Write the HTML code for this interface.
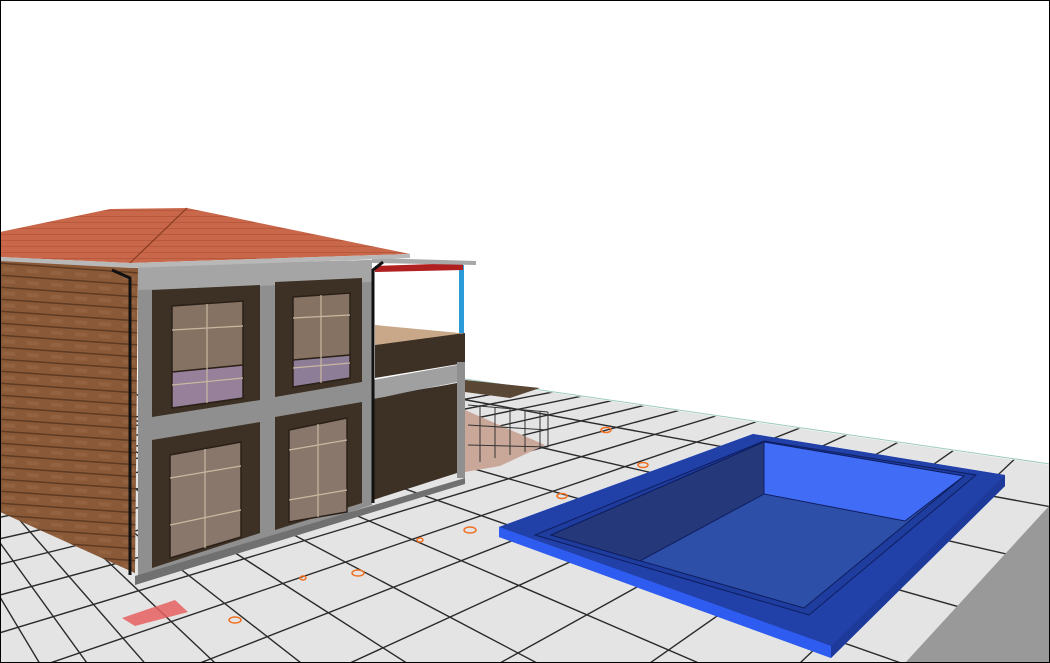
<!DOCTYPE html>
<html><head><meta charset="utf-8"><style>
html,body{margin:0;padding:0;background:#fff;overflow:hidden;width:1050px;height:663px;}
svg{display:block;}
</style></head><body>
<svg id="s" width="1050" height="663" viewBox="0 0 1050 663" xmlns="http://www.w3.org/2000/svg">
<defs>
<clipPath id="g"><polygon points="0,380 465,380 1050,465 1050,663 0,663"/></clipPath>
<pattern id="sid" width="24" height="12" patternUnits="userSpaceOnUse" patternTransform="skewY(4)">
<rect width="24" height="12" fill="#8a5a38"/><rect y="10.5" width="24" height="1.5" fill="#5e3a22"/><rect x="3" y="3" width="12" height="4" fill="#9a6848" opacity=".6"/></pattern>
<pattern id="rf" width="6" height="6" patternUnits="userSpaceOnUse"><rect width="6" height="6" fill="#c8674a"/><rect width="6" height="1" fill="#b8593e"/></pattern>
</defs>
<rect width="1050" height="663" fill="#fff"/>
<polygon points="0,380 465,380 1050,465 1050,663 0,663" fill="#e4e4e4"/>
<line x1="465" y1="379" x2="1050" y2="464" stroke="#9cc9be" stroke-width="1"/>
<g id="grid" clip-path="url(#g)" stroke="#2a2a2a" stroke-width="1.4" fill="none"></g>
<polygon points="905,663 1050,505 1050,663" fill="#999"/>
<!-- back deck -->
<polygon points="465,380 540,388 510,398 465,392" fill="#5a4634"/>
<polygon points="465,410 545,445 500,466 465,472" fill="#c9a89a"/>
<g stroke="#333" stroke-width="1" fill="none">
<path d="M468,405 L548,412 M468,425 L548,430 M468,445 L548,447"/>
<path d="M480,405 L480,462 M495,407 L495,458 M510,408 L510,455 M525,410 L525,452 M540,411 L540,449 M548,412 L548,447"/>
</g>
<!-- pool -->
<polygon points="499,527 753,434 1005,475 1005,486 831,658 499,537" fill="#2f56e0"/>
<polygon points="499,527 753,434 1005,475 831,646" fill="#2140a8"/>
<polygon points="499,527 831,646 831,658 499,537" fill="#2f5cf0"/>
<polygon points="831,646 1005,475 1005,486 831,658" fill="#1d3a9a"/>
<polygon points="535,535 764,441 976,475 809,615" fill="#1f3d9e" stroke="#0e1e60" stroke-width="1"/>
<polygon points="551,535 764,442 964,476 804,608" fill="#2e4fa8" stroke="#0e1e60" stroke-width="1"/>
<polygon points="764,442 964,476 905,521 764,494" fill="#416cf6" stroke="#0e1e60" stroke-width="1"/>
<polygon points="551,535 764,442 764,494 640,561" fill="#25397a" stroke="#0e1e60" stroke-width="1"/>
<!-- markers -->
<g fill="none" stroke="#f07020" stroke-width="1.5">
<ellipse cx="606" cy="430" rx="5" ry="2.5"/><ellipse cx="643" cy="465" rx="5" ry="2.5"/><ellipse cx="562" cy="496" rx="5" ry="2.5"/>
<ellipse cx="470" cy="530" rx="6" ry="3"/><ellipse cx="358" cy="573" rx="6" ry="3"/><ellipse cx="235" cy="620" rx="6" ry="3"/>
<ellipse cx="420" cy="540" rx="3" ry="2"/><ellipse cx="303" cy="578" rx="3" ry="2"/>
</g>
<polygon points="122,618 175,600 188,612 135,626" fill="#e86060" opacity=".85"/>
<!-- house left wall -->
<polygon points="0,258 138,268 135,573 0,512" fill="url(#sid)"/>
<!-- front wall -->
<polygon points="138,266 372,260 372,505 138,582" fill="#8f8f8f"/>
<polygon points="138,266 372,260 372,282 138,290" fill="#a5a5a5"/>
<polygon points="152,290 260,285 260,400 152,417" fill="#3d3024"/>
<polygon points="275,282 362,278 362,382 275,397" fill="#3d3024"/>
<polygon points="152,440 260,422 260,533 152,568" fill="#3d3024"/>
<polygon points="275,417 362,402 362,503 275,530" fill="#3d3024"/>
<g stroke="#2a2018" stroke-width="1.5">
<polygon points="172,306 243,301 243,398 172,408" fill="#857262"/>
<polygon points="172,372 243,365 243,398 172,408" fill="#96809a"/>
<polygon points="293,297 350,293 350,378 293,387" fill="#857262"/>
<polygon points="293,360 350,355 350,378 293,387" fill="#8e7d96"/>
<polygon points="170,455 241,442 241,537 170,558" fill="#8a776b"/>
<polygon points="289,430 347,418 347,512 289,522" fill="#8a776b"/>
</g>
<g stroke="#c8b8a0" stroke-width="1.2" fill="none">
<path d="M207,304 L207,403 M172,330 L243,326 M172,385 L243,378"/>
<path d="M321,295 L321,383 M293,318 L350,315 M293,368 L350,363"/>
<path d="M205,449 L205,548 M170,478 L241,466 M170,525 L241,510"/>
<path d="M318,424 L318,517 M289,450 L347,440 M289,500 L347,490"/>
</g>
<polygon points="135,576 465,478 465,484 135,585" fill="#707070"/>
<!-- extension -->
<polygon points="375,325 460,333 465,335 375,345" fill="#c8a888"/>
<polygon points="375,345 465,333 465,363 375,378" fill="#3d3024"/>
<polygon points="373,380 457,365 457,382 373,399" fill="#a0a0a0"/>
<polygon points="373,399 457,383 457,473 373,500" fill="#3d3024"/>
<rect x="457" y="362" width="8" height="116" fill="#8f8f8f"/>
<rect x="459" y="265" width="5" height="68" fill="#2a9ad8"/>
<polygon points="375,266 463,263 463,270 375,272" fill="#b02020"/>
<polygon points="372,258 476,261 476,265 372,263" fill="#a8a8a8"/>
<!-- roof -->
<polygon points="0,232 110,209 187,208 410,254 130,263 0,257" fill="url(#rf)"/>
<line x1="187" y1="208" x2="130" y2="263" stroke="#8a3a22" stroke-width="1.2"/>
<polygon points="0,257 130,263 410,254 410,258 130,268 0,261" fill="#b8b8b8"/>
<!-- downspouts -->
<path d="M112,270 L130,278 L130,575" stroke="#111" stroke-width="3" fill="none"/>
<path d="M383,262 L373,270 L373,503" stroke="#111" stroke-width="3" fill="none"/>
<rect x="0.5" y="0.5" width="1049" height="662" fill="none" stroke="#000" stroke-width="1"/>
</svg>
<script>
var g=document.getElementById('grid'),ns='http://www.w3.org/2000/svg';
function L(x1,y1,x2,y2){var l=document.createElementNS(ns,'line');l.setAttribute('x1',x1);l.setAttribute('y1',y1);l.setAttribute('x2',x2);l.setAttribute('y2',y2);g.appendChild(l);}
var A=[1221,263],B=[-190,280];
for(var x=-1600;x<1150;x+=150){L(A[0],A[1],A[0]+(x-A[0])*3,A[1]+400*3);}
var y=300,d=16;for(var k=0;k<30;k++){L(B[0],B[1],B[0]+(1240)*3,B[1]+(y-B[1])*3);y+=d;d*=1.2;}
</script>
</body></html>
